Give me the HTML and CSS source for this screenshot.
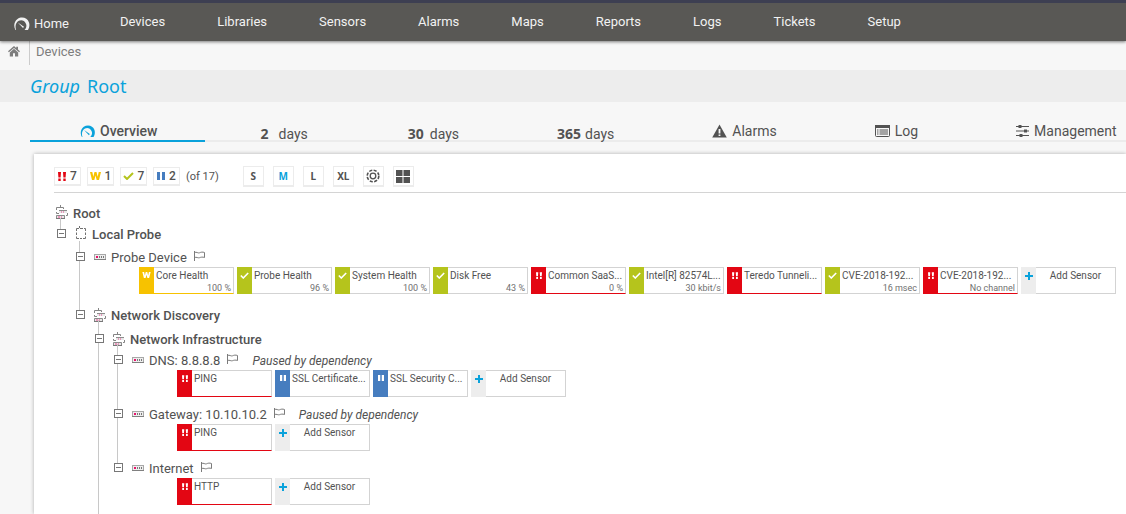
FILE: index.html
```
<!DOCTYPE html>
<html lang="en">
<head>
<meta charset="utf-8">
<title>Group Root</title>
<link rel="stylesheet" href="styles.css">
</head>
<body>
<svg class="defs" aria-hidden="true">
  <symbol id="gauge" viewBox="0 0 16 14">
    <path d="M2 13C-.2 9.500 .5 4.500 4 2 8-.8 14 .6 15.500 5.500c.9 2.800.2 5.500-1 7.500h-3.500c2-2 2.400-4.800 1.300-6.600C11 3.600 8 2.400 5.300 3.800 2.300 5.500 1.300 9 2.600 13z" fill="currentColor"/>
    <path d="M4.300 5.500L10.500 9.800 9.500 11z" fill="currentColor"/>
  </symbol>
  <symbol id="house" viewBox="0 0 12 11">
    <path d="M6 0L0 5.300l.9 1L6 1.900l5.100 4.400.9-1-2-1.700V.7H8.200v1.300z" fill="currentColor"/>
    <path d="M6 2.800L1.800 6.400V10.500h3.200V7.300h2v3.200h3.200V6.400z" fill="currentColor"/>
  </symbol>
  <symbol id="warning" viewBox="0 0 15 14">
    <path d="M7.500.5L14.800 13.500H.2z" fill="currentColor"/>
    <path d="M6.600 5h1.800v4.500H6.600zM6.600 10.500h1.800v1.600H6.600z" fill="#f7f7f7"/>
  </symbol>
  <symbol id="list" viewBox="0 0 15 12">
    <rect x=".5" y=".5" width="14" height="11" rx="1" fill="none" stroke="currentColor"/>
    <path d="M0 0h15v3H0zM2 4.500h1.500v1H2zM4.500 4.500H13v1H4.500zM2 6.500h1.500v1H2zM4.500 6.500H13v1H4.500zM2 8.500h1.500v1H2zM4.500 8.500H13v1H4.500z" fill="currentColor"/>
  </symbol>
  <symbol id="sliders" viewBox="0 0 13 12">
    <path d="M0 1.500h13M0 6h13M0 10.500h13" stroke="currentColor" stroke-width="1.200"/>
    <path d="M2.500 0h3v3h-3zM8 4.500h3v3H8zM3.500 9h3v3h-3z" fill="currentColor"/>
  </symbol>
  <symbol id="down" viewBox="0 0 8 9">
    <path d="M0 0h3l-.4 5.500H.4zM.3 6.500h2.400V9H.3zM5 0h3l-.4 5.500H5.400zM5.300 6.500h2.400V9H5.300z" fill="currentColor"/>
  </symbol>
  <symbol id="warn" viewBox="0 0 11 8">
    <path d="M0 0h2.300l1 4.800L4.500 0h2l1.200 4.800 1-4.800H11L9 8H6.700L5.500 3.600 4.300 8H2z" fill="currentColor"/>
  </symbol>
  <symbol id="check" viewBox="0 0 11 8">
    <path d="M1 4l3 3L10 1" fill="none" stroke="currentColor" stroke-width="2"/>
  </symbol>
  <symbol id="pause" viewBox="0 0 8 8">
    <path d="M0 0h3v8H0zM5 0h3v8H5z" fill="currentColor"/>
  </symbol>
  <symbol id="plus" viewBox="0 0 8 8">
    <path d="M3 0h2v3h3v2H5v3H3V5H0V3h3z" fill="currentColor"/>
  </symbol>
  <symbol id="gear" viewBox="0 0 14 14">
    <circle cx="7" cy="7" r="5.800" fill="none" stroke="currentColor" stroke-width="1.600" stroke-dasharray="3.100 1.450"/>
    <circle cx="7" cy="7" r="2.800" fill="none" stroke="currentColor" stroke-width="1.300"/>
  </symbol>
  <symbol id="grid" viewBox="0 0 14 13">
    <path d="M0 0h6.500v6H0zM7.500 0H14v6H7.500zM0 7h6.500v6H0zM7.500 7H14v6H7.500z" fill="currentColor"/>
  </symbol>
  <symbol id="group" viewBox="0 0 12 14">
    <path d="M4.500 0v2M.5 5V2.500h7V4M.5 7v1.500H3M11.500 8v2.500H10" fill="none" stroke="#858585"/>
    <path d="M3 5h8v3H3zM0 10h9v4H0z" fill="#e8e8e8"/>
    <path d="M3 5.500h8M.5 14v-3.500h8V14" fill="none" stroke="#8c8c8c"/>
    <path d="M0 13.500h9" stroke="#777"/>
    <path d="M5 6.500h1v1H5zM7 6.500h1v1H7zM2 11.500h2v1H2zM5 11.500h1v1H5z" fill="#e5468b"/>
  </symbol>
  <symbol id="probe" viewBox="0 0 12 14">
    <path d="M1.500 5V2.500H4M5 2.500h3M9 2.500h1.500V5M10.500 6.500V9M10.500 10.500V12.500H8M7 12.500H5M4 12.500H1.500v-2M1.500 9v-2.500M4.500 0v2" fill="none" stroke="#707070"/>
  </symbol>
  <symbol id="device" viewBox="0 0 12 14">
    <rect x=".5" y="5.500" width="11" height="5" fill="#eee" stroke="#a8a8a8"/>
    <path d="M0 10.500h12" stroke="#808080"/>
    <path d="M2 7h2v2H2z" fill="#e8116b"/>
    <path d="M5 7h1v2H5zM7 7h1v2H7zM9 7h1v2H9z" fill="#777"/>
  </symbol>
  <symbol id="flag" viewBox="0 0 11 10">
    <path d="M.5 0v10M.5 1.500c2-1 3.500 1 5 .3s3-1 5-.3v5c-2-.7-3.500-.4-5 .2s-3-1-5-.2" fill="none" stroke="#7b7b7b"/>
  </symbol>
</svg>

<header class="topbar">
  <nav class="nav" aria-label="Main">
    <a class="nav-link nav-home" href="#"><svg class="i-gauge"><use href="#gauge"/></svg>Home</a>
    <a class="nav-link" href="#">Devices</a>
    <a class="nav-link" href="#">Libraries</a>
    <a class="nav-link" href="#">Sensors</a>
    <a class="nav-link" href="#">Alarms</a>
    <a class="nav-link" href="#">Maps</a>
    <a class="nav-link" href="#">Reports</a>
    <a class="nav-link" href="#">Logs</a>
    <a class="nav-link" href="#">Tickets</a>
    <a class="nav-link" href="#">Setup</a>
  </nav>
</header>

<nav class="crumbs" aria-label="Breadcrumb">
  <a class="crumb-home" href="#" aria-label="Home"><svg class="i-house"><use href="#house"/></svg></a>
  <a class="crumb" href="#">Devices</a>
</nav>

<h1 class="title"><i>Group</i><span>Root</span></h1>

<nav class="tabs" aria-label="Views">
  <a class="tab tab-active" href="#"><svg class="i-gauge"><use href="#gauge"/></svg>Overview</a>
  <a class="tab tab-days" href="#"><b>2</b>days</a>
  <a class="tab tab-days" href="#"><b>30</b>days</a>
  <a class="tab tab-days" href="#"><b>365</b>days</a>
  <a class="tab" href="#"><svg class="i-warning"><use href="#warning"/></svg>Alarms</a>
  <a class="tab" href="#"><svg class="i-list"><use href="#list"/></svg>Log</a>
  <a class="tab tab-last" href="#"><svg class="i-sliders"><use href="#sliders"/></svg>Management</a>
</nav>

<main class="panel">
  <div class="toolbar">
    <div class="counts">
      <button class="count"><svg class="i-down c-red"><use href="#down"/></svg>7</button>
      <button class="count"><svg class="i-warn c-yellow"><use href="#warn"/></svg>1</button>
      <button class="count"><svg class="i-check c-green"><use href="#check"/></svg>7</button>
      <button class="count"><svg class="i-pause c-blue"><use href="#pause"/></svg>2</button>
      <span class="total">(of 17)</span>
    </div>
    <div class="sizes">
      <button class="size">S</button>
      <button class="size size-on">M</button>
      <button class="size">L</button>
      <button class="size">XL</button>
      <button class="size" aria-label="Settings"><svg class="i-gear"><use href="#gear"/></svg></button>
      <button class="size" aria-label="Tiles"><svg class="i-grid"><use href="#grid"/></svg></button>
    </div>
  </div>

  <div class="tree">
    <div class="row row-root"><svg class="i-node"><use href="#group"/></svg><b>Root</b></div>
    <ul class="nodes">
      <li class="node">
        <div class="row row-probe"><button class="toggle" aria-label="Collapse"></button><svg class="i-node"><use href="#probe"/></svg><b>Local Probe</b></div>
        <ul class="nodes">
          <li class="node device">
            <div class="row"><button class="toggle" aria-label="Collapse"></button><svg class="i-node"><use href="#device"/></svg><span>Probe Device</span><svg class="i-flag"><use href="#flag"/></svg></div>
            <div class="sensors">
              <a class="sensor yellow alert" href="#"><span class="mark"><svg class="s-warn"><use href="#warn"/></svg></span><span class="body"><span class="name">Core Health</span><span class="value">100 %</span></span></a>
              <a class="sensor green" href="#"><span class="mark"><svg class="s-check"><use href="#check"/></svg></span><span class="body"><span class="name">Probe Health</span><span class="value">96 %</span></span></a>
              <a class="sensor green" href="#"><span class="mark"><svg class="s-check"><use href="#check"/></svg></span><span class="body"><span class="name">System Health</span><span class="value">100 %</span></span></a>
              <a class="sensor green" href="#"><span class="mark"><svg class="s-check"><use href="#check"/></svg></span><span class="body"><span class="name">Disk Free</span><span class="value">43 %</span></span></a>
              <a class="sensor red alert" href="#"><span class="mark"><svg class="s-down"><use href="#down"/></svg></span><span class="body"><span class="name">Common SaaS...</span><span class="value">0 %</span></span></a>
              <a class="sensor green" href="#"><span class="mark"><svg class="s-check"><use href="#check"/></svg></span><span class="body"><span class="name">Intel[R] 82574L...</span><span class="value">30 kbit/s</span></span></a>
              <a class="sensor red alert" href="#"><span class="mark"><svg class="s-down"><use href="#down"/></svg></span><span class="body"><span class="name">Teredo Tunneli...</span></span></a>
              <a class="sensor green" href="#"><span class="mark"><svg class="s-check"><use href="#check"/></svg></span><span class="body"><span class="name">CVE-2018-192...</span><span class="value">16 msec</span></span></a>
              <a class="sensor red alert" href="#"><span class="mark"><svg class="s-down"><use href="#down"/></svg></span><span class="body"><span class="name">CVE-2018-192...</span><span class="value">No channel</span></span></a>
              <button class="sensor add"><span class="mark"><svg class="s-plus"><use href="#plus"/></svg></span><span class="body"><span class="name">Add Sensor</span></span></button>
            </div>
          </li>
          <li class="node group">
            <div class="row"><button class="toggle" aria-label="Collapse"></button><svg class="i-node"><use href="#group"/></svg><b>Network Discovery</b></div>
            <ul class="nodes">
              <li class="node group more">
                <div class="row"><button class="toggle" aria-label="Collapse"></button><svg class="i-node"><use href="#group"/></svg><b>Network Infrastructure</b></div>
                <ul class="nodes">
                  <li class="node device">
                    <div class="row"><button class="toggle" aria-label="Collapse"></button><svg class="i-node"><use href="#device"/></svg><span>DNS: 8.8.8.8</span><svg class="i-flag"><use href="#flag"/></svg><i class="note">Paused by dependency</i></div>
                    <div class="sensors">
                      <a class="sensor red alert" href="#"><span class="mark"><svg class="s-down"><use href="#down"/></svg></span><span class="body"><span class="name">PING</span></span></a>
                      <a class="sensor blue" href="#"><span class="mark"><svg class="s-pause"><use href="#pause"/></svg></span><span class="body"><span class="name">SSL Certificate...</span></span></a>
                      <a class="sensor blue" href="#"><span class="mark"><svg class="s-pause"><use href="#pause"/></svg></span><span class="body"><span class="name">SSL Security C...</span></span></a>
                      <button class="sensor add"><span class="mark"><svg class="s-plus"><use href="#plus"/></svg></span><span class="body"><span class="name">Add Sensor</span></span></button>
                    </div>
                  </li>
                  <li class="node device">
                    <div class="row"><button class="toggle" aria-label="Collapse"></button><svg class="i-node"><use href="#device"/></svg><span>Gateway: 10.10.10.2</span><svg class="i-flag"><use href="#flag"/></svg><i class="note">Paused by dependency</i></div>
                    <div class="sensors">
                      <a class="sensor red alert" href="#"><span class="mark"><svg class="s-down"><use href="#down"/></svg></span><span class="body"><span class="name">PING</span></span></a>
                      <button class="sensor add"><span class="mark"><svg class="s-plus"><use href="#plus"/></svg></span><span class="body"><span class="name">Add Sensor</span></span></button>
                    </div>
                  </li>
                  <li class="node device">
                    <div class="row"><button class="toggle" aria-label="Collapse"></button><svg class="i-node"><use href="#device"/></svg><span>Internet</span><svg class="i-flag"><use href="#flag"/></svg></div>
                    <div class="sensors">
                      <a class="sensor red alert" href="#"><span class="mark"><svg class="s-down"><use href="#down"/></svg></span><span class="body"><span class="name">HTTP</span></span></a>
                      <button class="sensor add"><span class="mark"><svg class="s-plus"><use href="#plus"/></svg></span><span class="body"><span class="name">Add Sensor</span></span></button>
                    </div>
                  </li>
                </ul>
              </li>
            </ul>
          </li>
        </ul>
      </li>
    </ul>
  </div>
</main>
</body>
</html>
```
FILE: styles.css
```
* { box-sizing: border-box; }
body {
  margin: 0;
  background: #f7f7f7;
  color: #525252;
  font: 13px/20px Roboto, sans-serif;
  display: flex;
  flex-direction: column;
  min-height: 100vh;
}
a { color: inherit; text-decoration: none; }
b { font-weight: 500; }
button { font: inherit; color: inherit; padding: 0; }
svg { display: block; flex: none; }
.defs { display: none; }

.topbar {
  position: relative;
  background: #595855;
  border-top: 3px solid #3d3f52;
  box-shadow: 0 1px 3px rgba(0, 0, 0, .5);
}
.nav { display: flex; height: 38px; align-items: center; padding-left: 13px; }
.nav-link { padding: 0 26px; color: #f2f2f2; white-space: nowrap; }
.nav-home { display: flex; align-items: center; gap: 4px; padding: 3px 25px 0 0; }
.i-gauge { width: 17px; height: 14px; }

.crumbs { display: flex; height: 29px; color: #7d7d7d; }
.crumb-home { width: 30px; height: 24px; padding: 5px 0 0 8px; border-right: 1px solid #ccc; }
.i-house { width: 12px; height: 11px; }
.crumb { padding: 1px 0 0 6px; }

.title {
  display: flex;
  gap: 7px;
  margin: 0;
  padding-left: 30px;
  background: #ededed;
  color: #0aa2db;
  font: 18px/32px "Noto Sans", sans-serif;
}

.tabs { display: flex; margin: 16px 0 12px 30px; height: 24px; font-size: 14px; box-shadow: inset 0 -2px #ececec; }
.tab { display: flex; flex: none; align-items: center; gap: 5px; padding: 2px 49px 0 49px; white-space: nowrap; }
.tab-active { font-weight: 500; border-bottom: 2px solid #0aa2db; padding: 4px 48px 0 50px; }
.tab-active .i-gauge { width: 15px; height: 13px; color: #0aa2db; }
.tab-days { padding-top: 7px; gap: 0; }
.tab-days b { min-width: 24px; padding-right: 4px; font: bold 14px/20px "Noto Sans", sans-serif; text-align: center; }
.tab-last { padding-right: 0; }
.i-warning { width: 15px; height: 14px; }
.i-list { width: 15px; height: 12px; }
.i-sliders { width: 13px; height: 12px; }

.panel { flex: 1; margin-left: 34px; padding: 12px 0 0 20px; background: #fff; box-shadow: 0 0 4px rgba(0, 0, 0, .3); clip-path: inset(-4px 0 0 -4px); }
.toolbar { display: flex; gap: 24px; height: 27px; border-bottom: 1px solid #d4d4d4; padding-bottom: 5px; }
.counts, .sizes { display: flex; align-items: center; }
.counts { gap: 6px; }
.count { display: flex; align-items: center; justify-content: center; gap: 4px; min-width: 27px; height: 19px; background: #fff; border: 1px solid #ececec; border-bottom-width: 2px; font-size: 12px; font-weight: 500; }
.total { font-size: 11px; }
.sizes { gap: 9px; }
.size { display: grid; place-items: center; width: 21px; height: 21px; background: #fff; border: 1px solid #ececec; border-bottom-width: 2px; font: bold 10px/18px "Noto Sans", sans-serif; }
.size-on { color: #0aa2db; }
.i-down { width: 8px; height: 9px; }
.i-warn { width: 11px; height: 8px; }
.i-check { width: 11px; height: 8px; }
.i-pause { width: 8px; height: 8px; }
.i-gear { width: 14px; height: 14px; }
.i-grid { width: 14px; height: 13px; }
.c-red { color: #e30613; }
.c-yellow { color: #f7c200; }
.c-green { color: #b5c41c; }
.c-blue { color: #467dbf; }

.tree { padding: 10px 0 0 2px; }
.nodes { list-style: none; margin: 0; padding: 0; }
.node { position: relative; padding-left: 19px; }
.node::before { content: ""; position: absolute; left: 4px; top: -6px; bottom: -7px; width: 1px; background: #c8c8c8; }
.node:last-child::before { bottom: auto; height: 16px; }
.node.more::before { bottom: 0; height: auto; }
.more { padding-bottom: 3px; }
.row { display: flex; align-items: center; gap: 5px; height: 21px; margin-left: -19px; white-space: nowrap; }
.row-root { margin-left: 0; }
.row-probe { margin-bottom: 2px; }
.device > .row { height: 20px; padding-top: 1px; }
.device { margin-bottom: 7px; }
.device:last-child { margin-bottom: 6px; }
.group { padding-top: 3px; }
.group > .row { padding-top: 1px; }
.device + .group { padding-top: 4px; }
.i-node { width: 12px; height: 14px; margin-bottom: 3px; }
.toggle { position: relative; width: 9px; height: 9px; margin: 0 4px 3px 1px; border: 1px solid #777; background: #fff; }
.toggle::before { content: ""; display: block; height: 1px; margin: 0 1px; background: #777; }
.i-flag { width: 11px; height: 10px; margin: 0 9px 4px 2px; }
.note { font-size: 12px; }

.sensors { display: flex; gap: 3px; padding-left: 45px; }
.sensor { display: flex; flex: none; width: 95px; height: 27px; background: #fff; border: 1px solid #d3d3d3; border-left: 0; font-size: 10px; text-align: left; }
.mark { display: flex; justify-content: center; align-items: flex-start; width: 15px; flex: none; margin: -1px 0; padding-top: 5px; background: var(--state); color: #fff; }
.body { flex: 1; min-width: 0; padding: 1px 2px 0; line-height: 13px; }
.name, .value { display: block; white-space: nowrap; }
.value { font-size: 9px; text-align: right; color: #707070; }
.yellow { --state: #f7c200; }
.green { --state: #b5c41c; }
.red { --state: #e30613; }
.blue { --state: #467dbf; }
.alert { border-bottom-color: var(--state); }
.add { --state: #ededed; }
.add .mark { color: #0aa2db; }
.add .name { text-align: center; }
.s-warn { width: 9px; height: 6px; }
.s-check { width: 9px; height: 7px; }
.s-down { width: 6px; height: 7px; }
.s-pause { width: 6px; height: 6px; }
.s-plus { width: 8px; height: 8px; }
```
